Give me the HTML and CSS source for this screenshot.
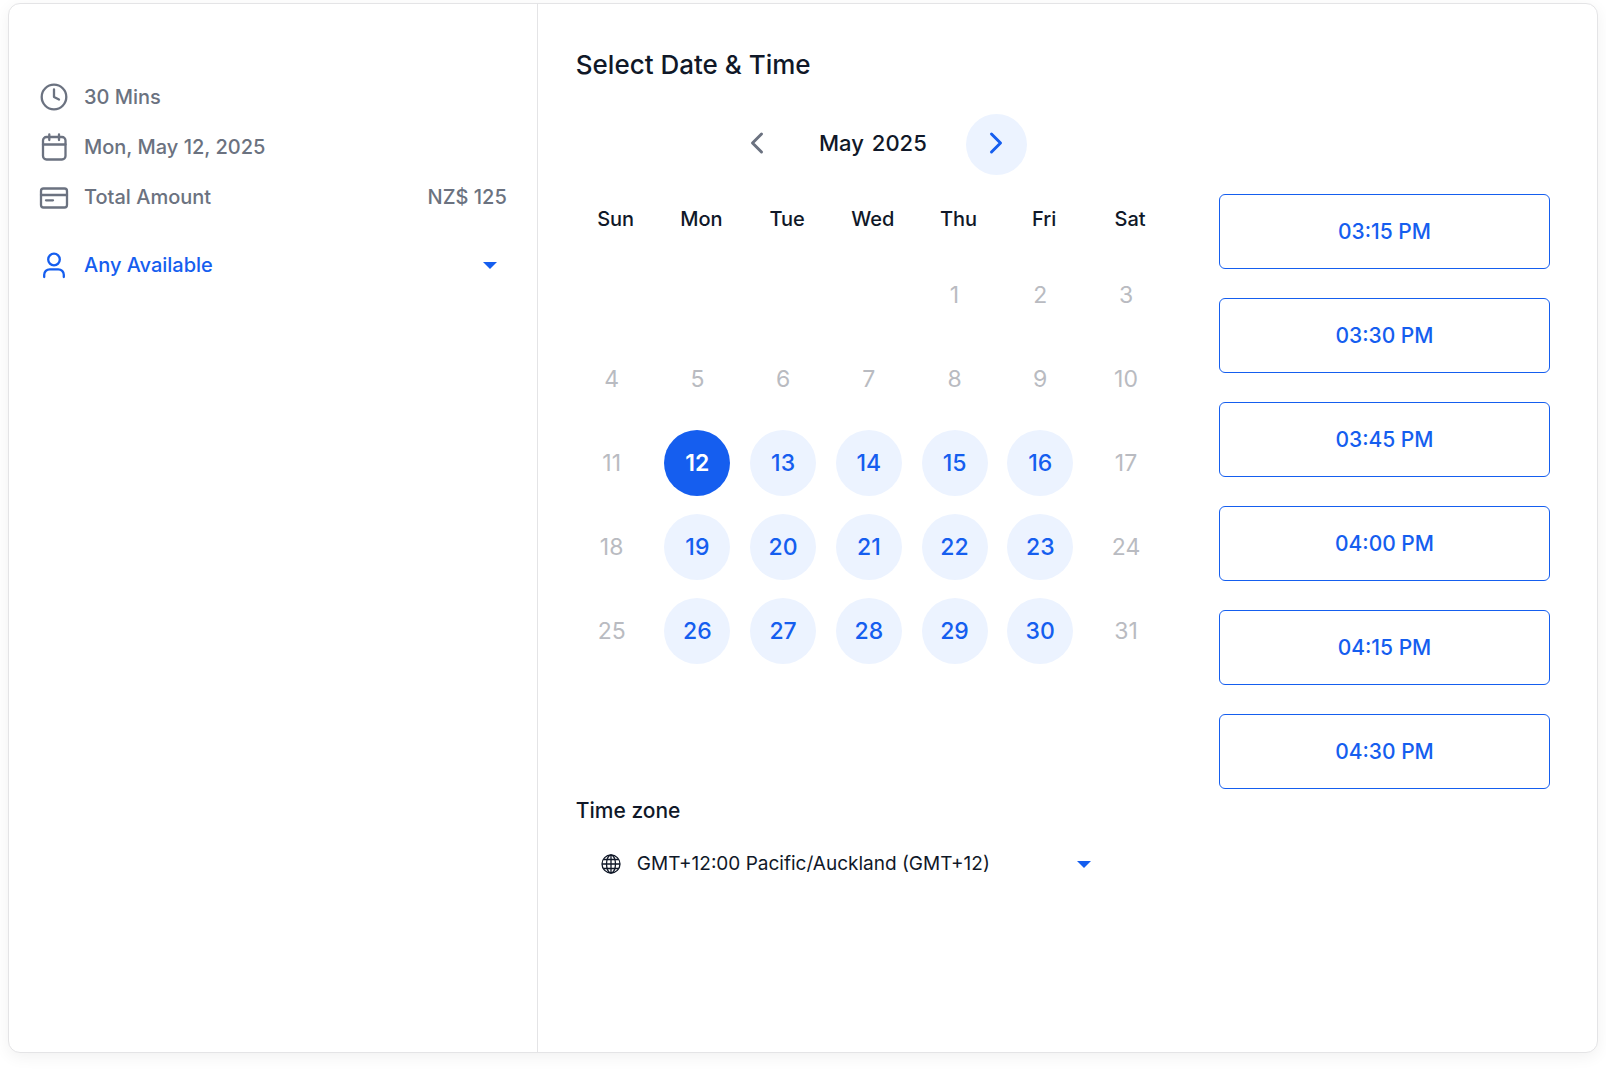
FILE: index.html
```html
<!DOCTYPE html>
<html lang="en">
<head>
  <meta charset="UTF-8">
  <meta name="viewport" content="width=device-width, initial-scale=1.0">
  <title>Select Date &amp; Time</title>
  <link rel="stylesheet" href="styles.css">
</head>
<body>
  <div class="booking">
    <aside class="summary">
      <div class="summary-row">
        <svg class="icon" viewBox="0 0 30 30"><circle cx="15" cy="15" r="12.3"/><path d="M15 7.5V15l5 2.5"/></svg>
        <span>30 Mins</span>
      </div>
      <div class="summary-row">
        <svg class="icon" viewBox="0 0 30 30"><rect x="4" y="5" width="22.5" height="22.5" rx="3.5"/><path d="M4 12.5h22.5M10.3 2.5v5.5M20 2.5v5.5"/></svg>
        <span>Mon, May 12, 2025</span>
      </div>
      <div class="summary-row">
        <svg class="icon" viewBox="0 0 30 30"><rect x="2" y="6.5" width="26" height="19" rx="2.5"/><path d="M2 13h26M7 18.3h7"/></svg>
        <span>Total Amount</span>
        <span class="amount">NZ$ 125</span>
      </div>
      <div class="summary-row staff">
        <svg class="icon" viewBox="0 0 30 30"><circle cx="15" cy="9.5" r="5.8"/><path d="M5.2 27v-2.2a5.5 5.5 0 0 1 5.5-5.5h8.6a5.5 5.5 0 0 1 5.5 5.5V27"/></svg>
        <select class="select" aria-label="Staff member">
          <option>Any Available</option>
        </select>
        <svg class="caret" viewBox="0 0 14 7"><path d="M0 0h14L7 7z"/></svg>
      </div>
    </aside>

    <main class="picker">
      <h1>Select Date &amp; Time</h1>
      <div class="picker-body">
        <section class="calendar">
          <div class="month-nav">
            <button class="nav-btn prev" aria-label="Previous month">
              <svg viewBox="0 0 16 24"><path d="M12.5 3L3.5 12l9 9"/></svg>
            </button>
            <h2><span>May</span> <span>2025</span></h2>
            <button class="nav-btn next" aria-label="Next month">
              <svg viewBox="0 0 16 24"><path d="M3.5 3l9 9-9 9"/></svg>
            </button>
          </div>

          <table>
            <thead>
              <tr><th>Sun</th><th>Mon</th><th>Tue</th><th>Wed</th><th>Thu</th><th>Fri</th><th>Sat</th></tr>
            </thead>
            <tbody>
              <tr>
                <td></td><td></td><td></td><td></td>
                <td><button class="day" disabled>1</button></td>
                <td><button class="day" disabled>2</button></td>
                <td><button class="day" disabled>3</button></td>
              </tr>
              <tr>
                <td><button class="day" disabled>4</button></td>
                <td><button class="day" disabled>5</button></td>
                <td><button class="day" disabled>6</button></td>
                <td><button class="day" disabled>7</button></td>
                <td><button class="day" disabled>8</button></td>
                <td><button class="day" disabled>9</button></td>
                <td><button class="day" disabled>10</button></td>
              </tr>
              <tr>
                <td><button class="day" disabled>11</button></td>
                <td><button class="day selected">12</button></td>
                <td><button class="day">13</button></td>
                <td><button class="day">14</button></td>
                <td><button class="day">15</button></td>
                <td><button class="day">16</button></td>
                <td><button class="day" disabled>17</button></td>
              </tr>
              <tr>
                <td><button class="day" disabled>18</button></td>
                <td><button class="day">19</button></td>
                <td><button class="day">20</button></td>
                <td><button class="day">21</button></td>
                <td><button class="day">22</button></td>
                <td><button class="day">23</button></td>
                <td><button class="day" disabled>24</button></td>
              </tr>
              <tr>
                <td><button class="day" disabled>25</button></td>
                <td><button class="day">26</button></td>
                <td><button class="day">27</button></td>
                <td><button class="day">28</button></td>
                <td><button class="day">29</button></td>
                <td><button class="day">30</button></td>
                <td><button class="day" disabled>31</button></td>
              </tr>
            </tbody>
          </table>

          <div class="timezone">
            <label for="timezone">Time zone</label>
            <div class="timezone-row">
              <svg class="globe" viewBox="0 0 20 20"><circle cx="10" cy="10" r="9"/><ellipse cx="10" cy="10" rx="4.5" ry="9"/><path d="M10 1v18M1 10h18M2.5 5.5h15M2.5 14.5h15"/></svg>
              <select class="select" id="timezone">
                <option>GMT+12:00 Pacific/Auckland (GMT+12)</option>
              </select>
              <svg class="caret" viewBox="0 0 14 7"><path d="M0 0h14L7 7z"/></svg>
            </div>
          </div>
        </section>

        <section class="slots">
          <button class="slot">03:15 PM</button>
          <button class="slot">03:30 PM</button>
          <button class="slot">03:45 PM</button>
          <button class="slot">04:00 PM</button>
          <button class="slot">04:15 PM</button>
          <button class="slot">04:30 PM</button>
        </section>
      </div>
    </main>
  </div>
</body>
</html>
```

FILE: styles.css
```css
:root {
  --primary: #155eef;
  --primary-light: #ecf3ff;
  --dark: #101828;
  --gray: #6b7280;
  --muted: #b9bbc1;
  --border: #e4e4e6;
}

* {
  box-sizing: border-box;
  margin: 0;
  padding: 0;
}

body {
  font-family: Inter, "Liberation Sans", sans-serif;
  font-size: 20px;
  line-height: 24px;
  font-weight: 500;
  color: var(--dark);
  background: white;
  min-height: 100vh;
  padding: 3px 8px 17px;
  display: flex;
}

button,
select {
  font: inherit;
  color: inherit;
  border: none;
  background: none;
  cursor: pointer;
}

.booking {
  display: flex;
  width: 100%;
  background: white;
  border: 1px solid var(--border);
  border-radius: 12px;
  box-shadow: 0 4px 16px rgba(0, 0, 0, 0.06);
}

/* Left column */
.summary {
  width: 33.3%;
  padding: 78px 30px 30px;
  border-right: 1px solid var(--border);
  color: var(--gray);
}

.summary-row {
  display: flex;
  align-items: center;
  height: 30px;
  margin-bottom: 20px;
}

.icon {
  width: 30px;
  height: 30px;
  margin-right: 15px;
  flex: none;
  fill: none;
  stroke: currentColor;
  stroke-width: 2.3;
  stroke-linecap: round;
  stroke-linejoin: round;
}

.amount {
  margin-left: auto;
}

.staff {
  margin-top: 38px;
  padding-right: 10px;
  color: var(--primary);
}

.select {
  appearance: none;
  flex: 1;
  min-width: 0;
  outline: none;
}

.caret {
  width: 14px;
  height: 7px;
  fill: var(--primary);
  pointer-events: none;
}

/* Right column */
.picker {
  flex: 1;
  min-width: 0;
  padding: 45px 47px 30px 31px;
}

h1 {
  font-size: 26px;
  line-height: 32px;
  font-weight: 500;
  padding-left: 7px;
}

.picker-body {
  display: flex;
  align-items: flex-start;
  margin-top: 33px;
}

.calendar {
  flex: 600;
}

.month-nav {
  display: flex;
  justify-content: center;
  align-items: center;
  padding-left: 16px;
}

.month-nav h2 {
  display: flex;
  gap: 8px;
  font-size: 22px;
  line-height: 28px;
  font-weight: 500;
  margin: 0 39px 0 31px;
  padding-bottom: 3px;
}

.nav-btn {
  display: flex;
  align-items: center;
  justify-content: center;
  width: 61px;
  height: 61px;
  padding-bottom: 4px;
  border-radius: 50%;
}

.nav-btn svg {
  width: 16px;
  height: 24px;
  fill: none;
  stroke: currentColor;
  stroke-width: 3;
  stroke-linecap: round;
  stroke-linejoin: round;
}

.prev {
  color: var(--gray);
}

.next {
  color: var(--primary);
  background: var(--primary-light);
}

table {
  width: 100%;
  table-layout: fixed;
  border-collapse: collapse;
}

th {
  height: 78px;
  padding: 10px 0 0 8px;
  font-weight: 500;
  vertical-align: middle;
}

td {
  height: 84px;
  text-align: center;
  vertical-align: middle;
}

.day {
  width: 66px;
  height: 66px;
  border-radius: 50%;
  font-size: 23px;
  font-weight: 500;
  color: var(--primary);
  background: var(--primary-light);
}

.day:disabled {
  font-weight: 400;
  color: var(--muted);
  background: none;
  cursor: default;
}

.day.selected {
  font-weight: 600;
  color: white;
  background: var(--primary);
}

.timezone {
  margin-top: 126px;
  padding-left: 7px;
}

.timezone label {
  display: block;
  font-size: 21px;
}

.timezone-row {
  display: flex;
  align-items: center;
  width: 515px;
  height: 30px;
  margin-top: 26px;
  padding-left: 25px;
  font-size: 19px;
  font-weight: 400;
}

.globe {
  width: 20px;
  height: 20px;
  margin-right: 16px;
  fill: none;
  stroke: currentColor;
  stroke-width: 1.3;
}

.slots {
  flex: 331;
  margin: 80px 0 0 50px;
  display: flex;
  flex-direction: column;
  gap: 29px;
}

.slot {
  height: 75px;
  border: 1px solid var(--primary);
  border-radius: 6px;
  font-size: 21px;
  color: var(--primary);
}

.slot:hover {
  background: var(--primary-light);
}
```
